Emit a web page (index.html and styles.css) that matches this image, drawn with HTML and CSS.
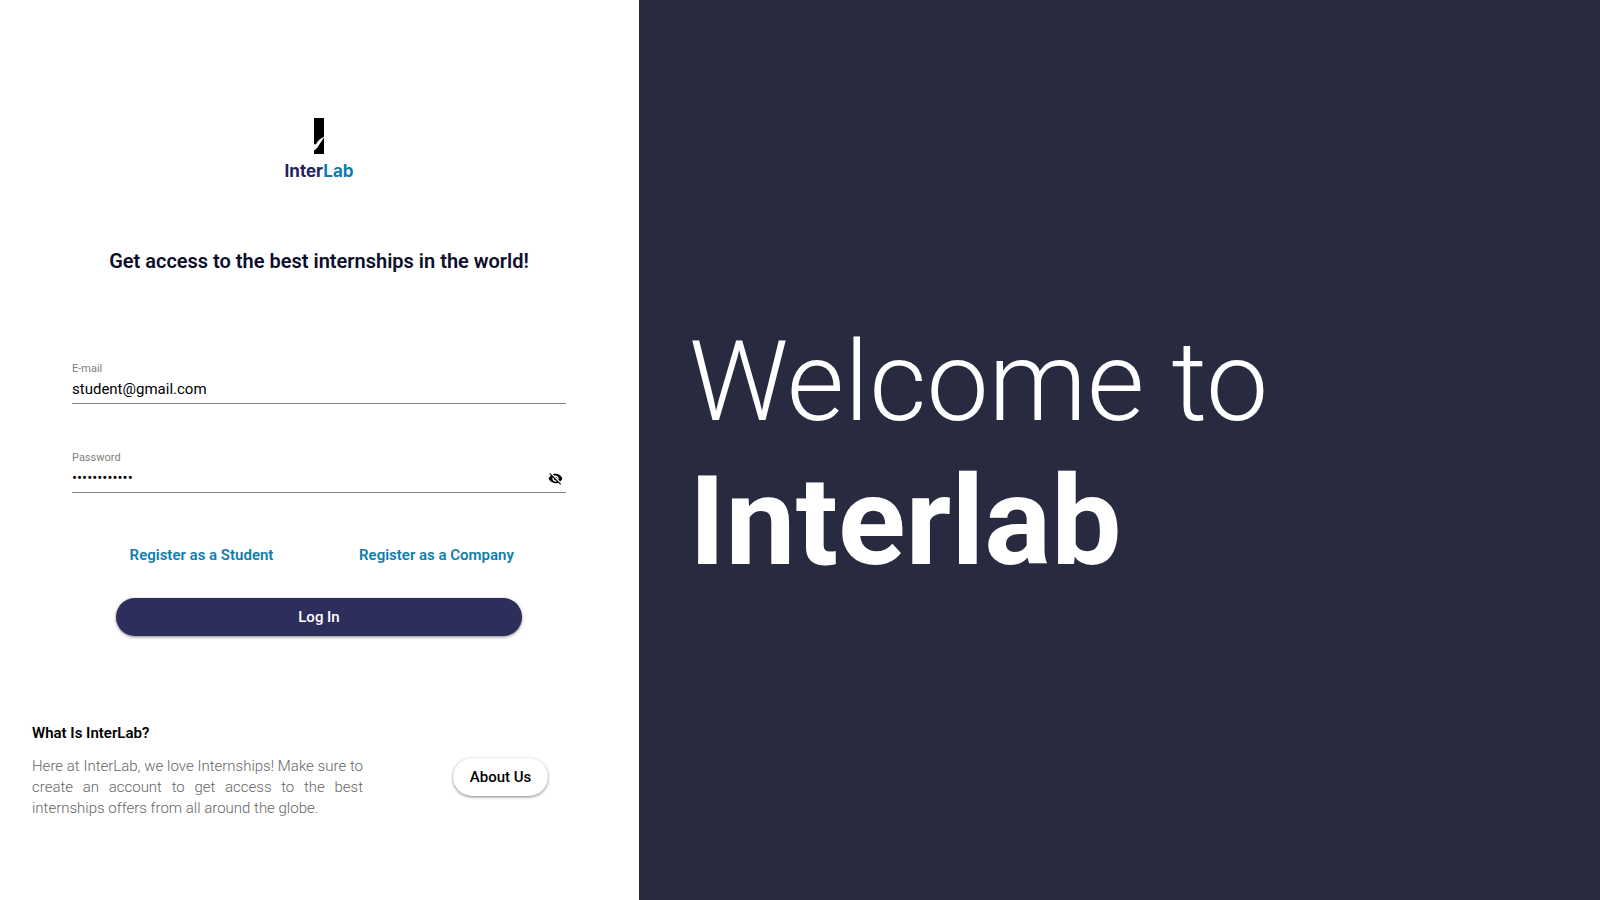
FILE: index.html
```html
<!DOCTYPE html>
<html lang="en">
<head>
<meta charset="utf-8">
<title>InterLab</title>
<link rel="stylesheet" href="styles.css">
</head>
<body>
<div class="page">
  <main class="panel">
    <div class="brand">
      <svg class="brand-mark" viewBox="0 0 10 36" aria-hidden="true">
        <path fill="#000" d="M0 0H10V18.500L5 22C3.500 23.400 2.600 25.400 2 26.600L0 26Z"/>
        <path fill="#000" d="M10 19.200V36H0V32.500C2.400 31 4 28.600 6 25.400Z"/>
      </svg>
      <div class="brand-name">Inter<span class="brand-accent">Lab</span></div>
    </div>
    <h1 class="headline">Get access to the best internships in the world!</h1>
    <form class="form">
      <div class="field">
        <label class="label" for="email">E-mail</label>
        <input class="input" id="email" type="email" value="student@gmail.com">
      </div>
      <div class="field">
        <label class="label" for="password">Password</label>
        <div class="password-row">
          <input class="input password" id="password" type="password" value="internship12">
          <button class="toggle" type="button" aria-label="Show password">
            <svg class="eye" viewBox="0 0 24 24" aria-hidden="true"><path d="M12 7c2.760 0 5 2.240 5 5 0 .65-.13 1.260-.36 1.830l2.920 2.920c1.510-1.260 2.700-2.890 3.430-4.750-1.730-4.390-6-7.500-11-7.500-1.400 0-2.740.25-3.980.7l2.160 2.160C10.740 7.130 11.350 7 12 7zM2 4.270l2.280 2.280.46.46C3.080 8.300 1.780 10.020 1 12c1.730 4.390 6 7.500 11 7.500 1.550 0 3.030-.3 4.380-.84l.42.42L19.730 22 21 20.730 3.270 3 2 4.270zM7.530 9.800l1.550 1.550c-.05.21-.08.43-.08.65 0 1.660 1.340 3 3 3 .22 0 .44-.03.65-.08l1.550 1.550c-.67.33-1.410.53-2.200.53-2.760 0-5-2.240-5-5 0-.79.2-1.530.53-2.200zm4.310-.78l3.150 3.150.02-.16c0-1.660-1.340-3-3-3l-.17.01z"/></svg>
          </button>
        </div>
      </div>
      <nav class="links">
        <a class="link" href="#student">Register as a Student</a>
        <a class="link" href="#company">Register as a Company</a>
      </nav>
      <button class="login" type="submit">Log In</button>
    </form>
    <section class="about">
      <div class="about-copy">
        <h2 class="about-title">What Is InterLab?</h2>
        <p class="about-text">Here at InterLab, we love Internships! Make sure to create an account to get access to the best internships offers from all around the globe.</p>
      </div>
      <div class="about-action"><button class="about-button" type="button">About Us</button></div>
    </section>
  </main>
  <aside class="hero">
    <p class="welcome">Welcome to</p>
    <p class="welcome-name">Interlab</p>
  </aside>
</div>
</body>
</html>
```
FILE: styles.css
```css
* { box-sizing: border-box; margin: 0; padding: 0; }
body { font-family: Roboto, sans-serif; background: #fff; color: #000; }
button, input { font: inherit; border: 0; background: none; }
button { cursor: pointer; }
.page { display: grid; grid-template-columns: 639fr 961fr; min-height: 100vh; }
.panel { display: flex; flex-direction: column; padding: 118px 33px 32px 32px; background: #fff; }
.brand { display: flex; flex-direction: column; align-items: center; gap: 6px; }
.brand-mark { width: 10px; height: 36px; }
.brand-name { font: 700 17px/22px Inter, sans-serif; color: #24235b; }
.brand-accent { color: #0e7dad; }
.headline { margin-top: 67px; text-align: center; font-size: 20px; line-height: 24px; font-weight: 600; color: #0c0f2b; }
.form { display: flex; flex-direction: column; margin: 89px 40px 0; }
.field { display: flex; flex-direction: column; margin-bottom: 47px; border-bottom: 1px solid #808080; height: 42px; }
.label { font-size: 11px; line-height: 14px; color: #808080; }
.input { display: block; width: 100%; height: 26px; font-size: 15px; color: #000; outline: 0; }
.password-row { display: flex; align-items: center; }
.password { flex: 1; }
.toggle { display: flex; padding: 4px 3px; }
.eye { width: 15px; height: 15px; fill: #000; }
.links { display: grid; grid-template-columns: 1fr 1fr; margin: 5px 12px 0; justify-items: center; }
.link { font-size: 15px; line-height: 20px; font-weight: 600; color: #0e7dad; text-decoration: none; }
.login { height: 38px; margin: 33px 44px 0; border-radius: 19px; background: #2d2e5b; color: #fff; font-size: 15px; font-weight: 500; box-shadow: 0 1px 3px rgba(0, 0, 0, .5); }
.about { display: grid; grid-template-columns: 331fr 243fr; align-items: center; margin-top: 87px; }
.about-title { font-size: 15px; line-height: 20px; font-weight: 600; }
.about-text { margin-top: 13px; font-size: 15px; line-height: 21px; font-weight: 300; color: #666; text-align: justify; }
.about-action { display: flex; justify-content: center; padding: 12px 0 0 32px; }
.about-button { padding: 0 17px; height: 38px; border-radius: 19px; background: #fff; font-size: 15px; font-weight: 500; box-shadow: 0 1px 3px rgba(0, 0, 0, .5); }
.hero { display: flex; flex-direction: column; justify-content: center; padding: 4px 50px 0; background: #282a3f; color: #fff; }
.welcome { font-size: 111px; line-height: 140px; font-weight: 300; }
.welcome-name { font-size: 125px; line-height: 140px; font-weight: 700; }
```
